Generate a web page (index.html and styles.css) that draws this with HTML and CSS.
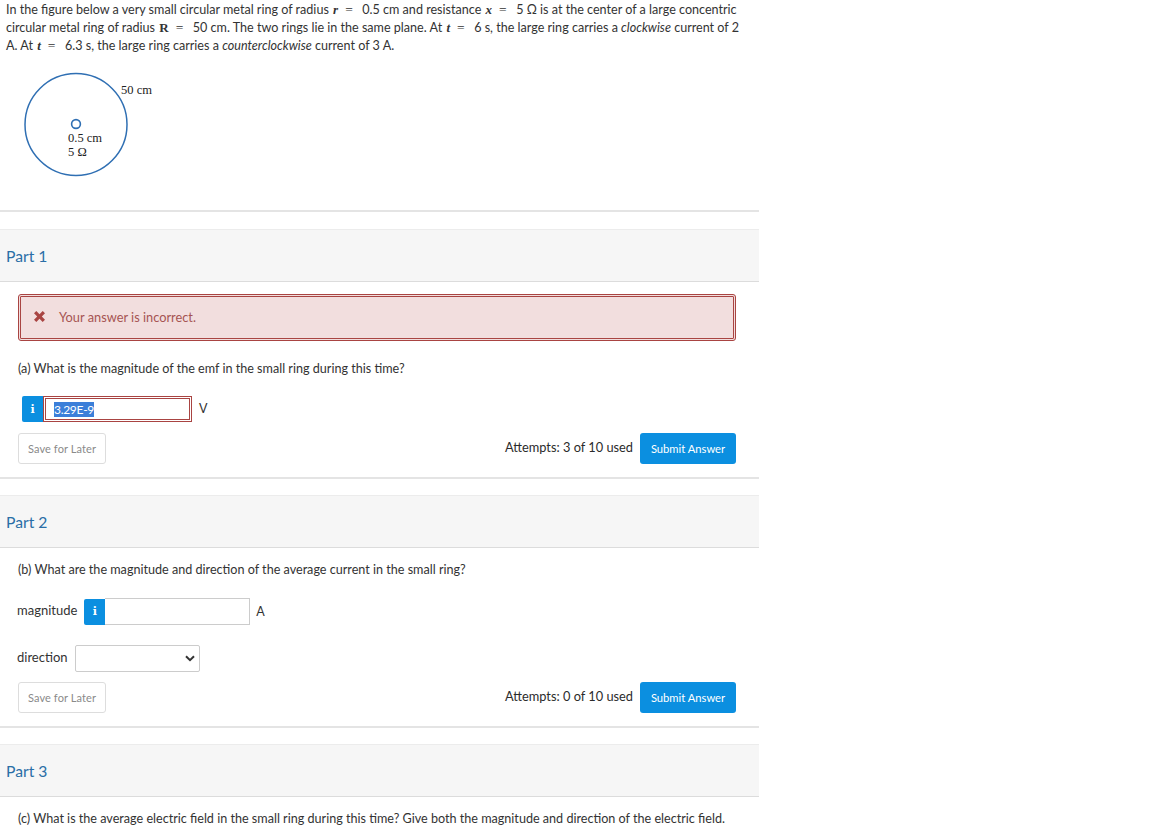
FILE: index.html
```html
<!DOCTYPE html>
<html lang="en">
<head>
<meta charset="utf-8">
<title>Question</title>
<link rel="stylesheet" href="styles.css">
</head>
<body>
<main class="page">
  <section class="intro">
    <p class="stem">In the figure below a very small circular metal ring of radius <i class="mv">r</i><span class="eq">=</span>0.5 cm and resistance <i class="mv">x</i><span class="eq">=</span>5 Ω is at the center of a large concentric circular metal ring of radius <b class="mv">R</b><span class="eq">=</span>50 cm. The two rings lie in the same plane. At <i class="mv">t</i><span class="eq">=</span>6 s, the large ring carries a <em>clockwise</em> current of 2 A. At <i class="mv">t</i><span class="eq">=</span>6.3 s, the large ring carries a <em>counterclockwise</em> current of 3 A.</p>
    <div class="figure">
      <svg class="rings" width="150" height="112" viewBox="0 0 150 112" aria-hidden="true">
        <circle cx="76" cy="52.5" r="51" fill="none" stroke="#2f6fb3" stroke-width="1.5"/>
        <circle cx="76" cy="52" r="4.4" fill="none" stroke="#2f6fb3" stroke-width="1.6"/>
      </svg>
      <span class="lbl lbl-r">50 cm</span>
      <span class="lbl lbl-s">0.5 cm</span>
      <span class="lbl lbl-o">5 Ω</span>
    </div>
  </section>

  <section class="part">
    <h2 class="part-head">Part 1</h2>
    <div class="part-body">
      <div class="alert">
        <svg class="x-icon" width="13" height="13" viewBox="0 0 13 13" aria-hidden="true"><path d="M1 3.3 3.3 1l3.2 3.2L9.7 1 12 3.3 8.8 6.5 12 9.7 9.7 12 6.5 8.8 3.3 12 1 9.7l3.2-3.2z" fill="#a94442"/></svg>
        <span class="alert-text">Your answer is incorrect.</span>
      </div>
      <p class="ask ask-a">(a) What is the magnitude of the emf in the small ring during this time?</p>
      <div class="answer-row row-a">
        <span class="info info-a">i</span>
        <span class="input input-bad"><span class="sel">3.29E-9</span></span>
        <span class="unit">V</span>
      </div>
      <div class="actions actions-a">
        <button class="save" type="button">Save for Later</button>
        <div class="submit-wrap">
          <span class="attempts">Attempts: 3 of 10 used</span>
          <button class="submit" type="button">Submit Answer</button>
        </div>
      </div>
    </div>
  </section>

  <section class="part">
    <h2 class="part-head">Part 2</h2>
    <div class="part-body">
      <p class="ask ask-b">(b) What are the magnitude and direction of the average current in the small ring?</p>
      <div class="answer-row row-b">
        <span class="field-label">magnitude</span>
        <span class="info info-b">i</span>
        <span class="input input-ok"></span>
        <span class="unit">A</span>
      </div>
      <div class="answer-row row-c">
        <span class="field-label">direction</span>
        <span class="select">
          <svg width="10" height="7" viewBox="0 0 10 7" aria-hidden="true"><path d="M1 1.2 5 5.2 9 1.2" fill="none" stroke="#333" stroke-width="2"/></svg>
        </span>
      </div>
      <div class="actions actions-b">
        <button class="save" type="button">Save for Later</button>
        <div class="submit-wrap">
          <span class="attempts">Attempts: 0 of 10 used</span>
          <button class="submit" type="button">Submit Answer</button>
        </div>
      </div>
    </div>
  </section>

  <section class="part part-last">
    <h2 class="part-head">Part 3</h2>
    <div class="part-body">
      <p class="ask ask-c">(c) What is the average electric field in the small ring during this time? Give both the magnitude and direction of the electric field.</p>
    </div>
  </section>
</main>
</body>
</html>
```
FILE: styles.css
```css
* { box-sizing: border-box; }
html, body { margin: 0; padding: 0; background: #fff; }
body { font-family: Lato, "Open Sans", sans-serif; font-size: 13px; color: #333; height: 840px; overflow: hidden; }
.page { width: 759px; }
p { margin: 0; }

.intro { border-bottom: 2px solid #e4e4e4; height: 212px; margin-bottom: 17px; }
.stem { padding: 1px 14px 0 6px; line-height: 18px; font-size: 12.58px; }
.mv { font-family: "Liberation Serif", serif; font-weight: bold; font-size: 13px; line-height: 0; margin-left: 1px; }
.eq { font-family: "Liberation Serif", serif; margin: 0 9.5px 0 7px; font-size: 13.5px; line-height: 0; }
.figure { position: relative; width: 160px; height: 112px; margin-top: 17px; }
.rings { display: block; }
.lbl { position: absolute; font-family: "Liberation Serif", serif; font-size: 12.5px; line-height: 14px; color: #222; white-space: nowrap; }
.lbl-r { left: 121px; top: 11px; }
.lbl-s { left: 68px; top: 59px; }
.lbl-o { left: 68px; top: 73px; }

.part { border-bottom: 2px solid #e4e4e4; margin-bottom: 16px; }
.part-last { border-bottom: 0; margin-bottom: 0; }
.part-head { margin: 0; height: 53px; padding: 0 6px; display: flex; align-items: center; font-size: 15.7px; font-weight: 400; color: #2a6ea6; background: #f6f6f6; border-top: 1px solid #ececec; border-bottom: 1px solid #dcdcdc; }
.part-body { padding: 0 23px 0 18px; }

.alert { height: 47px; margin-top: 12px; display: flex; align-items: center; gap: 13px; padding-left: 12px; background: #f2dede; border: 3px double #a94442; border-radius: 3px; color: #a65452; font-size: 12.8px; }
.x-icon { margin-bottom: 2px; }
.alert-text { margin-bottom: 2px; }
.ask { line-height: 18px; font-size: 12.6px; }
.ask-a { margin-top: 19px; }
.ask-b { margin-top: 13px; }
.ask-c { margin-top: 13px; }

.answer-row { display: flex; align-items: center; }
.row-a { margin-top: 18px; padding-left: 4px; height: 26px; }
.row-b { margin-top: 19px; height: 27px; }
.row-c { margin-top: 20px; height: 27px; }
.info { width: 21px; height: 26px; background: #0b8fe0; color: #fff; font-family: "DejaVu Serif", serif; font-weight: bold; font-size: 11px; display: flex; align-items: center; justify-content: center; border-radius: 2px 0 0 2px; }
.input { display: flex; align-items: center; background: #fff; }
.input-bad { width: 149px; height: 26px; border: 3px double #a94442; padding-left: 8px; }
.input-ok { width: 145px; height: 27px; border: 1px solid #ccc; border-left: 0; }
.sel { background: #3b7fd9; color: #fff; font-size: 12px; letter-spacing: -0.3px; line-height: 15px; }
.unit { margin-left: 6px; font-size: 12.5px; }
.row-a .unit { margin-left: 7px; margin-bottom: 1px; }
.field-label { font-size: 13px; margin: 0 7px 3px -1px; }
.select { width: 125px; height: 27px; border: 1px solid #ccc; border-radius: 2px; display: flex; align-items: center; justify-content: flex-end; padding-right: 4px; }

.actions { display: flex; justify-content: space-between; align-items: center; height: 31px; }
.actions-a { margin-top: 11px; margin-bottom: 13px; }
.actions-b { margin-top: 10px; margin-bottom: 13px; }
.save { width: 88px; height: 31px; padding: 0; background: #fff; border: 1px solid #ddd; border-radius: 3px; color: #8a8a8a; font: 400 11px Lato, sans-serif; letter-spacing: 0.1px; }
.submit-wrap { display: flex; align-items: center; gap: 7px; }
.attempts { font-size: 12.8px; color: #2b2b2b; margin-bottom: 3px; }
.submit { width: 96px; height: 31px; padding: 0; background: #0b8fe0; border: 0; border-radius: 3px; color: #fff; font: 400 11.2px Lato, sans-serif; }
```
